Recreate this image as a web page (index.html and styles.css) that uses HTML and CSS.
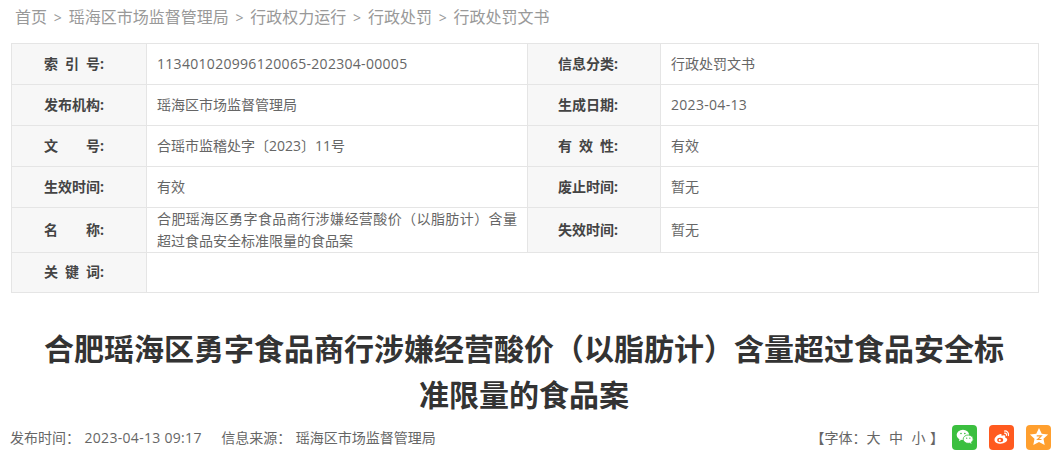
FILE: index.html
```html
<!DOCTYPE html>
<html lang="zh-CN">
<head>
<meta charset="utf-8">
<title>行政处罚文书</title>
<link rel="stylesheet" href="styles.css">
</head>
<body>
<nav class="crumbs">
  <a>首页</a><span class="sep">&gt;</span><a>瑶海区市场监督管理局</a><span class="sep">&gt;</span><a>行政权力运行</a><span class="sep">&gt;</span><a>行政处罚</a><span class="sep">&gt;</span><a>行政处罚文书</a>
</nav>
<table class="meta">
  <colgroup><col class="c1"><col class="c2"><col class="c3"><col class="c4"></colgroup>
  <tr class="r41"><th>索&ensp;引&ensp;号:</th><td class="num">113401020996120065-202304-00005</td><th>信息分类:</th><td>行政处罚文书</td></tr>
  <tr class="r41"><th>发布机构:</th><td>瑶海区市场监督管理局</td><th>生成日期:</th><td class="num">2023-04-13</td></tr>
  <tr class="r41"><th>文<span class="wide"></span>号:</th><td>合瑶市监稽处字〔2023〕11号</td><th>有&ensp;效&ensp;性:</th><td>有效</td></tr>
  <tr class="r41"><th>生效时间:</th><td>有效</td><th>废止时间:</th><td>暂无</td></tr>
  <tr class="r45"><th>名<span class="wide"></span>称:</th><td class="tight">合肥瑶海区勇字食品商行涉嫌经营酸价（以脂肪计）含量超过食品安全标准限量的食品案</td><th>失效时间:</th><td>暂无</td></tr>
  <tr class="r40"><th>关&ensp;键&ensp;词:</th><td colspan="3"></td></tr>
</table>
<h1 class="title">合肥瑶海区勇字食品商行涉嫌经营酸价（以脂肪计）含量超过食品安全标准限量的食品案</h1>
<div class="info">
  <div class="source">
    <span>发布时间：</span><span class="gap-a num">2023-04-13 09:17</span><span class="gap-b">信息来源：</span><span class="gap-a">瑶海区市场监督管理局</span>
  </div>
  <div class="tools">
    <span class="size">【字体：<a>大</a><a>中</a><a class="last">小</a>】</span>
    <span class="share wx">
      <svg viewBox="0 0 24 24" width="20" height="20"><ellipse cx="9.500" cy="9.500" rx="7.500" ry="6.200" fill="#fff"/><path d="M5.500 14l-.8 3 3-1.600z" fill="#fff"/><ellipse cx="15.800" cy="14.600" rx="6" ry="5" fill="#fff" stroke="#3bbf3f" stroke-width="1"/><path d="M19 18l1 2.200-3-1.200z" fill="#fff"/><circle cx="7.200" cy="7.800" r="1" fill="#3bbf3f"/><circle cx="11.800" cy="7.800" r="1" fill="#3bbf3f"/><circle cx="14" cy="13.400" r=".8" fill="#3bbf3f"/><circle cx="17.800" cy="13.400" r=".8" fill="#3bbf3f"/></svg>
    </span>
    <span class="share wb">
      <svg viewBox="0 0 24 24" width="20" height="20"><path d="M10.500 8.500c-3.500.6-7.500 3.700-7.500 7 0 2.700 3.300 4.500 7.300 4.500 4.600 0 8-2.500 8-4.900 0-1.700-1.700-2.300-2.600-2.600.5-1.300.3-2.300-1.200-2.500-1-.1-2 .3-3 .7.300-1.300 0-2.300-1-2.200z" fill="#fff"/><ellipse cx="9.800" cy="15.600" rx="3.600" ry="2.700" fill="#ff5a1f"/><circle cx="9.300" cy="15.800" r="1.300" fill="#fff"/><path d="M15 4.800c2.800-.3 5.500 2.100 4.700 5.400M15.200 7.400c1.400-.2 2.500 1 2.100 2.500" fill="none" stroke="#fff" stroke-width="1.500" stroke-linecap="round"/></svg>
    </span>
    <span class="share qz">
      <svg viewBox="0 0 24 24" width="22" height="22"><path d="M12 2.200l3 6.300 6.900.9-5 4.600 1.300 6.800-6.200-3.400-6.200 3.400 1.300-6.800-5-4.600 6.900-.9z" fill="#fff"/><path d="M9.500 10.700h5l-4 4h4.200" fill="none" stroke="#ff9f2e" stroke-width="1.300"/></svg>
    </span>
  </div>
</div>
</body>
</html>
```
FILE: styles.css
```css
* { box-sizing: border-box; }
html, body { margin: 0; padding: 0; }
body {
  width: 1060px;
  height: 456px;
  overflow: hidden;
  background: #fff;
  font-family: "Open Sans", "Noto Sans CJK SC", sans-serif;
  color: #666;
}
.crumbs {
  height: 43px;
  padding: 6px 0 0 15px;
  font-size: 16px;
  line-height: 22px;
  color: #999;
}
.crumbs .sep { margin: 0 6.800px; font-size: 14px; }
.meta {
  margin-left: 11px;
  width: 1028px;
  table-layout: fixed;
  border-collapse: collapse;
  font-size: 14px;
}
.c1 { width: 135px; }
.c2 { width: 381px; }
.c3 { width: 133px; }
.c4 { width: 378px; }
.meta th, .meta td {
  border: 1px solid #e5e5e5;
  padding: 0 10px 1px;
  line-height: 20px;
}
.meta th {
  background: #f7f7f7;
  color: #444;
  font-weight: 700;
  text-align: left;
  padding-left: 32px;
  white-space: pre;
}
.meta th:nth-child(3) { padding-left: 30px; }
.wide { display: inline-block; width: 28px; }
.meta td { color: #666; }
.meta td.tight {
  line-height: 22px;
  padding-bottom: 0;
  text-align: justify;
}
.num { letter-spacing: .3px; }
.r41 { height: 41px; }
.r45 { height: 45px; }
.r40 { height: 40px; }
.title {
  margin: 33px 0 0;
  padding: 0 56px 0 44px;
  font-size: 30px;
  line-height: 46px;
  font-weight: 700;
  color: #333;
  text-align: center;
}
.info {
  display: flex;
  justify-content: space-between;
  align-items: center;
  height: 32px;
  margin-top: 3px;
  padding: 0 9px 0 10px;
  font-size: 14px;
}
.gap-a { margin-left: 4.500px; }
.gap-b { margin-left: 19.500px; }
.tools { display: flex; align-items: center; }
.size a { margin-right: 8.500px; }
.size a.last { margin-right: 4.500px; }
.share {
  display: flex;
  align-items: center;
  justify-content: center;
  width: 25px;
  height: 25px;
  margin-left: 12px;
  border-radius: 4px;
}
.wx { background: #3bbf3f; margin-left: 8px; }
.wb { background: #ff5a1f; }
.qz { background: #ff9f2e; }
```
